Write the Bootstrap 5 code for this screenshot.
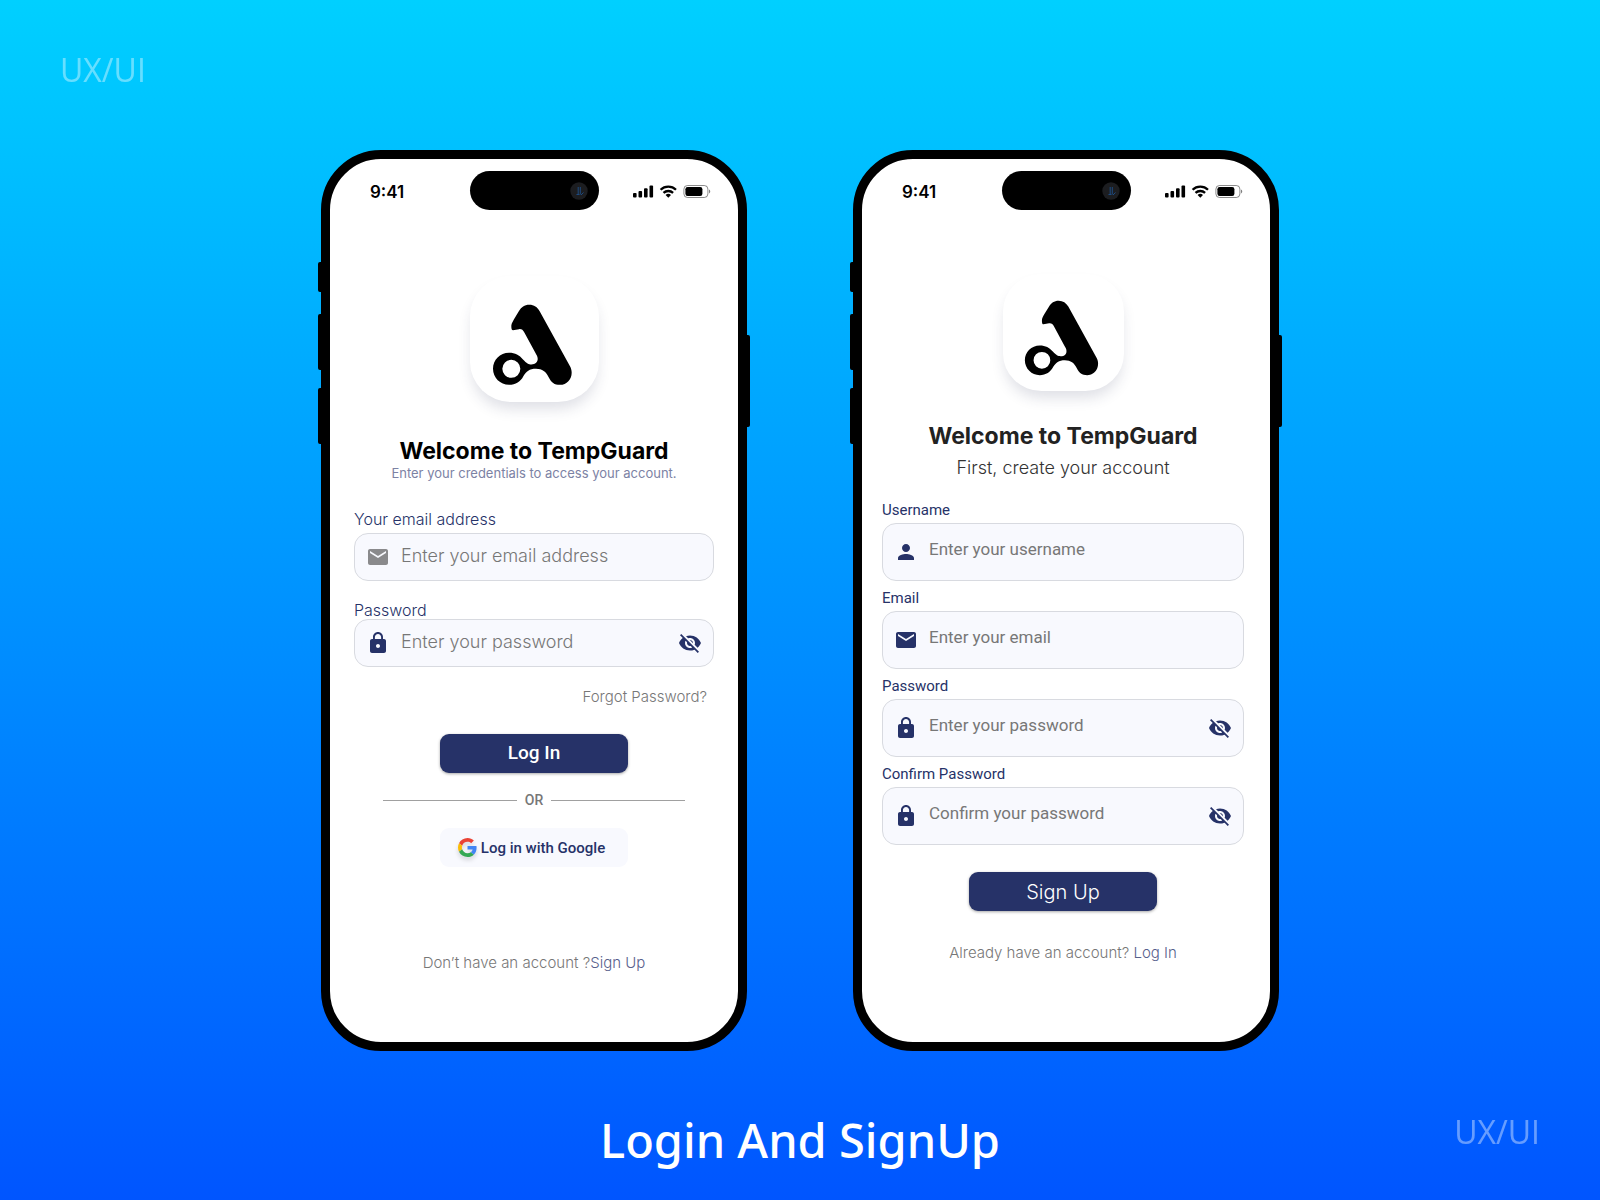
<!DOCTYPE html>
<html lang="en">
<head>
<meta charset="utf-8">
<meta name="viewport" content="width=device-width, initial-scale=1">
<title>Login And SignUp</title>
<link href="https://cdn.jsdelivr.net/npm/bootstrap@5.3.0/dist/css/bootstrap.min.css" rel="stylesheet">
<style>
  :root { --navy: #263268; --field: #f8f9fe; --line: #d8dae0; }
  body { font-family: Inter, "Open Sans", sans-serif; background: linear-gradient(180deg, #00d0ff 0%, #0055ff 100%); line-height: 20px; }
  .tag { font-size: 32px; line-height: 44px; color: #fff; opacity: .4; font-family: "Open Sans", sans-serif; }
  .stage-top { padding: 48px 60px 58px; }
  .phones { column-gap: 106px; row-gap: 60px; }
  .caption-row { padding: 54px 60px 30px; }
  .caption { font-family: "Noto Sans", sans-serif; font-size: 47px; line-height: 60px; font-weight: 500; color: #fff; }

  .phone { width: 426px; background: #fff; border: 9px solid #000; border-radius: 60px; }
  .side-key { position: absolute; width: 4px; background: #000; left: -12px; border-radius: 2px 0 0 2px; }
  .key-a { top: 103px; height: 30px; }
  .key-b { top: 155px; height: 56px; }
  .key-c { top: 229px; height: 56px; }
  .key-d { top: 176px; height: 92px; left: auto; right: -12px; border-radius: 0 2px 2px 0; }

  .status { padding: 12px 27px 0; height: 51px; }
  .status-side { flex: 1 1 0; padding-top: 2px; }
  .clock { font-size: 17px; font-weight: 600; color: #000; text-indent: 13px; }
  .island { width: 129px; height: 39px; border-radius: 20px; background: #000; padding-right: 11px; }

  .logo { border-radius: 32%; background: #fff; box-shadow: 0 9px 14px -2px rgba(40, 50, 90, .15); }
  .logo-lg { width: 129px; height: 126px; margin-top: 66px; }
  .logo-sm { width: 121px; height: 117px; margin-top: 64px; }

  .heading { font-size: 23px; line-height: 28px; font-weight: 700; }
  .field { background: var(--field); border: 1px solid var(--line); border-radius: 14px; padding: 0 11px; }
  .field svg { flex: none; }
  .field input { background: transparent; border: 0; outline: 0; min-width: 0; padding: 0 0 2px 11px; }
  .field input::placeholder { color: #777; opacity: 1; }
  .field-label { color: var(--navy); display: block; }
  .eye { border: 0; background: none; padding: 0; display: flex; color: var(--navy); }
  .small-text { font-size: 15px; font-weight: 300; color: #777; }
  .small-text a, a.small-text { text-decoration: none; }
  .small-text a { color: #57608c; }
  .action { width: 188px; height: 39px; border-radius: 9px; border: 0; padding: 0; font-size: 19px; background: var(--navy); color: #fff; box-shadow: 0 1px 3px rgba(0, 0, 0, .35); }
  .google { width: 188px; height: 39px; border-radius: 9px; border: 0; padding: 0 5px 0 0; background: var(--field); color: var(--navy); font: 500 15px/20px Roboto, sans-serif; }
  .google svg { filter: drop-shadow(0 3px 2px rgba(0, 0, 0, .15)); }
  .divider { margin: 17px 29px 18px; gap: 8px; font: 500 14px/20px Roboto, sans-serif; color: #777; }
  .divider hr { border-color: #777; opacity: .7; }

  .login .form-body { padding: 0 24px; }
  .login .heading { margin-top: 35px; }
  .login .sub { font-size: 13px; line-height: 16px; color: #7c82a4; }
  .login .field { height: 48px; }
  .login .field input { font-size: 18px; font-weight: 300; }
  .login .field-label { font-size: 16px; line-height: 18px; font-weight: 300; margin-top: 29px; margin-bottom: 5px; }
  .login .second { margin-top: 20px; margin-bottom: 0; }
  .forgot { margin: 20px 7px 0 0; }
  .action-login { margin-top: 27px; font-family: Roboto, sans-serif; font-weight: 500; }
  .login .foot { margin: 86px 0 69px; }

  .signup .form-body { padding: 0 26px 0 20px; }
  .signup .heading { margin-top: 31px; color: #222; }
  .signup .sub { font-size: 18px; line-height: 24px; font-weight: 300; color: #333; margin: 6px 0 19px; }
  .signup .field { height: 58px; margin-bottom: 6px; }
  .signup .field input, .signup .field-label { font-family: Roboto, sans-serif; }
  .signup .field input { font-size: 17px; padding-bottom: 6px; }
  .signup .field-label { font-size: 15px; line-height: 22px; margin-bottom: 2px; }
  .action-signup { margin-top: 21px; font-size: 20px; font-weight: 300; }
  .signup .foot { margin: 32px 0 60px; }
</style>
</head>
<body class="min-vh-100 d-flex flex-column">
<svg width="0" height="0" class="position-absolute" aria-hidden="true">
  <symbol id="mark" viewBox="480 409 387 377">
    <path fill-rule="evenodd" d="M658 495C672 495 682 502 689 514L780 679C794 705 777 735 750 735C733 735 724 728 716 712C708 696 697 687 678 687C658 687 649 695 640 709C632 725 617 735 597 735C571 735 549 714 549 687C549 660 570 639 597 639C616 639 628 646 639 659C650 671 656 674 664 674C677 674 684 666 683 656C683 651 680 646 676 639L643 578C639 570 634 567 627 568L609 571C604 571 604 563 604 557C605 549 608 546 612 538L626 515C634 502 643 495 658 495ZM604 660A27 27 0 1 0 604 714A27 27 0 1 0 604 660Z"/>
  </symbol>
  <symbol id="mail" viewBox="0 0 24 24"><path fill="currentColor" d="M20 4H4c-1.100 0-1.990.9-1.990 2L2 18c0 1.100.9 2 2 2h16c1.100 0 2-.9 2-2V6c0-1.100-.9-2-2-2zm0 4l-8 5-8-5V6l8 5 8-5v2z"/></symbol>
  <symbol id="lock" viewBox="0 0 24 24"><path fill="currentColor" d="M18 8h-1V6c0-2.760-2.240-5-5-5S7 3.240 7 6v2H6c-1.100 0-2 .9-2 2v10c0 1.100.9 2 2 2h12c1.100 0 2-.9 2-2V10c0-1.100-.9-2-2-2zm-6 9c-1.100 0-2-.9-2-2s.9-2 2-2 2 .9 2 2-.9 2-2 2zm3.100-9H8.900V6c0-1.710 1.390-3.100 3.100-3.100s3.100 1.390 3.100 3.100v2z"/></symbol>
  <symbol id="person" viewBox="0 0 24 24"><path fill="currentColor" d="M12 12c2.210 0 4-1.790 4-4s-1.790-4-4-4-4 1.790-4 4 1.790 4 4 4zm0 2c-2.670 0-8 1.340-8 4v2h16v-2c0-2.660-5.330-4-8-4z"/></symbol>
  <symbol id="eye-off" viewBox="0 0 24 24"><path fill="currentColor" d="M12 7c2.760 0 5 2.240 5 5 0 .65-.13 1.260-.36 1.830l2.920 2.920c1.510-1.260 2.700-2.890 3.430-4.750-1.730-4.390-6-7.500-11-7.500-1.400 0-2.740.25-3.980.7l2.160 2.160C10.740 7.130 11.350 7 12 7zM2 4.270l2.280 2.280.46.46C3.080 8.300 1.780 10.020 1 12c1.730 4.390 6 7.500 11 7.500 1.550 0 3.030-.3 4.380-.84l.42.42L19.730 22 21 20.730 3.270 3 2 4.270zM7.530 9.800l1.550 1.550c-.05.21-.08.43-.08.65 0 1.660 1.340 3 3 3 .22 0 .44-.03.65-.08l1.550 1.550c-.67.33-1.410.53-2.200.53-2.760 0-5-2.240-5-5 0-.79.2-1.530.53-2.200zm4.310-.78l3.150 3.150.02-.16c0-1.660-1.340-3-3-3l-.17.01z"/></symbol>
  <symbol id="google-g" viewBox="0 0 48 48">
    <path fill="#EA4335" d="M24 9.500c3.540 0 6.710 1.220 9.210 3.600l6.850-6.850C35.900 2.380 30.470 0 24 0 14.620 0 6.510 5.380 2.560 13.220l7.980 6.190C12.430 13.720 17.740 9.500 24 9.500z"/>
    <path fill="#4285F4" d="M46.980 24.550c0-1.570-.15-3.090-.38-4.550H24v9.020h12.940c-.58 2.960-2.260 5.480-4.780 7.180l7.730 6c4.510-4.180 7.090-10.360 7.090-17.650z"/>
    <path fill="#FBBC05" d="M10.530 28.590c-.48-1.450-.76-2.990-.76-4.590s.27-3.140.76-4.590l-7.980-6.190C.92 16.460 0 20.120 0 24c0 3.880.92 7.540 2.560 10.780l7.970-6.190z"/>
    <path fill="#34A853" d="M24 48c6.480 0 11.930-2.130 15.890-5.810l-7.730-6c-2.150 1.450-4.920 2.300-8.160 2.300-6.260 0-11.570-4.220-13.470-9.910l-7.980 6.190C6.510 42.620 14.620 48 24 48z"/>
  </symbol>
  <symbol id="camera" viewBox="0 0 18 18"><circle cx="9" cy="9" r="8.700" fill="#1c1d20"/><path d="M8.200 5v8M10.300 5v7.500M6.500 12.500h3M11 13l2.500-2.500" stroke="#1d4a80" stroke-width="1" fill="none"/></symbol>
  <symbol id="signals" viewBox="0 0 78 13">
    <rect x="0" y="8" width="3.600" height="4.500" rx="1"/><rect x="5.500" y="6" width="3.600" height="6.500" rx="1"/><rect x="11" y="3.300" width="3.600" height="9.200" rx="1"/><rect x="16.500" y="0.500" width="3.600" height="12" rx="1"/>
    <g fill="none" stroke="#000" stroke-width="2.300"><path d="M27.600 4.700a11 11 0 0 1 15.400 0"/><path d="M30.500 7.900a7 7 0 0 1 9.600 0"/></g><path d="M35.300 12.700l-2.700-2.700a3.800 3.800 0 0 1 5.400 0z"/>
    <rect x="50.900" y=".5" width="24" height="12" rx="3.600" fill="none" stroke="#000" stroke-opacity=".45"/><rect x="52.400" y="2" width="17" height="9" rx="2.200"/><path d="M76 4.600c1.700.6 1.700 3.200 0 3.800z" fill-opacity=".5"/>
  </symbol>
</svg>

<header class="stage-top"><div class="tag">UX/UI</div></header>

<main class="phones d-flex flex-wrap justify-content-center align-items-stretch">
  <section class="phone login position-relative d-flex flex-column" aria-label="Log in">
    <span class="side-key key-a"></span><span class="side-key key-b"></span><span class="side-key key-c"></span><span class="side-key key-d"></span>
    <div class="status d-flex align-items-center">
      <div class="status-side clock">9:41</div>
      <div class="island d-flex align-items-center justify-content-end"><svg width="18" height="18"><use href="#camera"/></svg></div>
      <div class="status-side d-flex justify-content-end"><svg width="78" height="13"><use href="#signals"/></svg></div>
    </div>
    <form class="form-body d-flex flex-column" onsubmit="return false">
      <svg class="logo logo-lg align-self-center"><use href="#mark"/></svg>
      <h1 class="heading text-center text-black mb-0">Welcome to TempGuard</h1>
      <p class="sub text-center mb-0">Enter your credentials to access your account.</p>
      <label class="field-label" for="li-email">Your email address</label>
      <div class="field d-flex align-items-center">
        <svg width="24" height="24" color="#8a8a8c"><use href="#mail"/></svg>
        <input class="flex-grow-1" id="li-email" type="email" placeholder="Enter your email address">
      </div>
      <label class="field-label second" for="li-pass">Password</label>
      <div class="field d-flex align-items-center">
        <svg width="24" height="24" color="#263268"><use href="#lock"/></svg>
        <input class="flex-grow-1" id="li-pass" type="password" placeholder="Enter your password">
        <button class="eye" type="button" aria-label="Show password"><svg width="24" height="24"><use href="#eye-off"/></svg></button>
      </div>
      <a class="small-text forgot align-self-end" href="#">Forgot Password?</a>
      <button class="btn action action-login align-self-center" type="submit">Log In</button>
      <div class="divider d-flex align-items-center"><hr class="flex-grow-1 m-0"><span>OR</span><hr class="flex-grow-1 m-0"></div>
      <button class="btn google align-self-center d-flex align-items-center justify-content-center gap-1" type="button"><svg width="19" height="19" overflow="visible"><use href="#google-g"/></svg>Log in with Google</button>
      <p class="small-text foot text-center">Don’t have an account ?<a href="#">Sign Up</a></p>
    </form>
  </section>

  <section class="phone signup position-relative d-flex flex-column" aria-label="Sign up">
    <span class="side-key key-a"></span><span class="side-key key-b"></span><span class="side-key key-c"></span><span class="side-key key-d"></span>
    <div class="status d-flex align-items-center">
      <div class="status-side clock">9:41</div>
      <div class="island d-flex align-items-center justify-content-end"><svg width="18" height="18"><use href="#camera"/></svg></div>
      <div class="status-side d-flex justify-content-end"><svg width="78" height="13"><use href="#signals"/></svg></div>
    </div>
    <form class="form-body d-flex flex-column" onsubmit="return false">
      <svg class="logo logo-sm align-self-center"><use href="#mark"/></svg>
      <h2 class="heading text-center mb-0">Welcome to TempGuard</h2>
      <p class="sub text-center">First, create your account</p>
      <label class="field-label" for="su-name">Username</label>
      <div class="field d-flex align-items-center">
        <svg width="24" height="24" color="#263268"><use href="#person"/></svg>
        <input class="flex-grow-1" id="su-name" type="text" placeholder="Enter your username">
      </div>
      <label class="field-label" for="su-email">Email</label>
      <div class="field d-flex align-items-center">
        <svg width="24" height="24" color="#263268"><use href="#mail"/></svg>
        <input class="flex-grow-1" id="su-email" type="email" placeholder="Enter your email">
      </div>
      <label class="field-label" for="su-pass">Password</label>
      <div class="field d-flex align-items-center">
        <svg width="24" height="24" color="#263268"><use href="#lock"/></svg>
        <input class="flex-grow-1" id="su-pass" type="password" placeholder="Enter your password">
        <button class="eye" type="button" aria-label="Show password"><svg width="24" height="24"><use href="#eye-off"/></svg></button>
      </div>
      <label class="field-label" for="su-conf">Confirm Password</label>
      <div class="field d-flex align-items-center">
        <svg width="24" height="24" color="#263268"><use href="#lock"/></svg>
        <input class="flex-grow-1" id="su-conf" type="password" placeholder="Confirm your password">
        <button class="eye" type="button" aria-label="Show password"><svg width="24" height="24"><use href="#eye-off"/></svg></button>
      </div>
      <button class="btn action action-signup align-self-center" type="submit">Sign Up</button>
      <p class="small-text foot text-center">Already have an account? <a href="#">Log In</a></p>
    </form>
  </section>
</main>

<footer class="caption-row row g-0 align-items-start mt-auto">
  <div class="col"></div>
  <div class="col-auto caption">Login And SignUp</div>
  <div class="col tag text-end">UX/UI</div>
</footer>
<script src="https://cdn.jsdelivr.net/npm/bootstrap@5.3.0/dist/js/bootstrap.bundle.min.js"></script>
</body>
</html>
